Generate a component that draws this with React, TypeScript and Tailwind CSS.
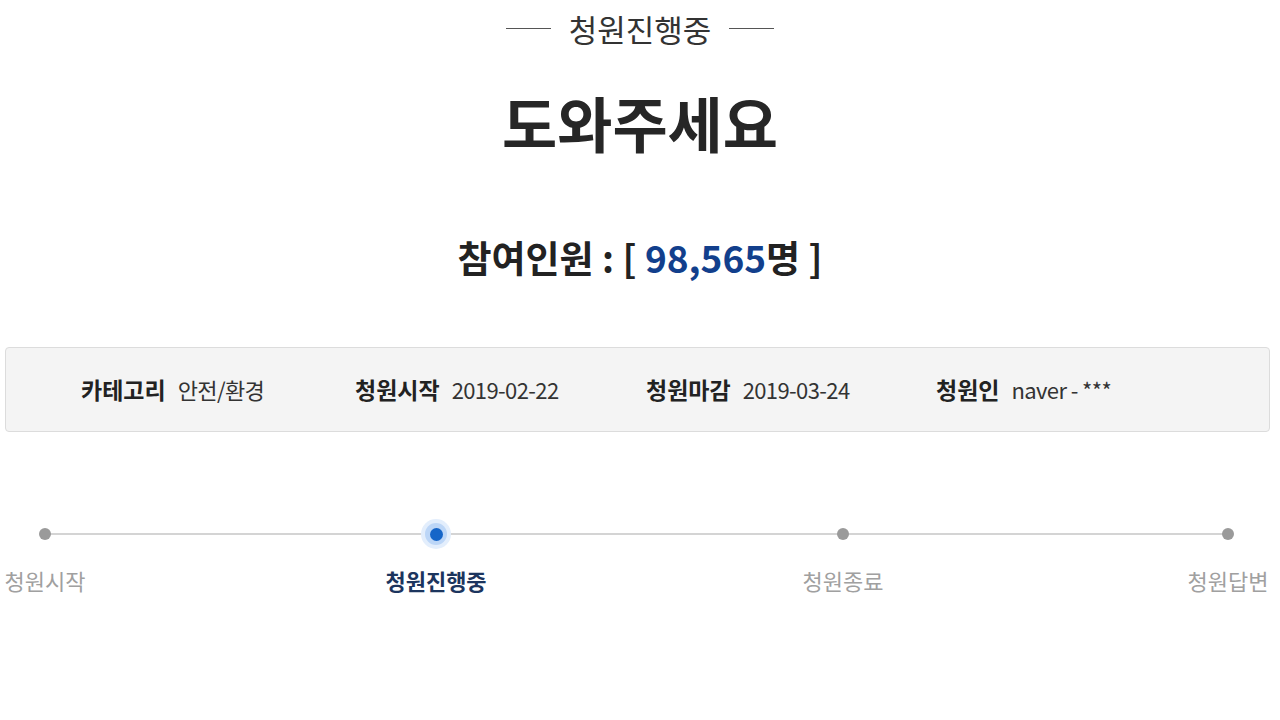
import React from "react";

const font = { fontFamily: '"Noto Sans CJK KR", "Noto Sans", sans-serif' };

function Info({ label, value }: { label: string; value: string }) {
  return (
    <div className="flex items-center gap-[12px]">
      <span className="text-[23px] font-bold text-[#222]">{label}</span>
      <span className="text-[22px] text-[#333] tracking-[-0.6px]">{value}</span>
    </div>
  );
}

function Step({ label, active, ml }: { label: string; active?: boolean; ml: string }) {
  return (
    <div className={`flex w-[90px] flex-col items-center ${ml}`}>
      <div className="flex h-[30px] w-[30px] items-center justify-center">
        {active ? (
          <div className="flex h-[30px] w-[30px] items-center justify-center rounded-full bg-[#e3eefc]">
            <div className="flex h-[22px] w-[22px] items-center justify-center rounded-full bg-[#bcd6f7]">
              <div className="h-[13px] w-[13px] rounded-full bg-[#1565c8]" />
            </div>
          </div>
        ) : (
          <div className="h-[12px] w-[12px] rounded-full bg-[#9a9a9a]" />
        )}
      </div>
      <div
        className={`mt-[17px] whitespace-nowrap text-[22px] leading-[28px] ${
          active ? "font-bold text-[#1c355e]" : "text-[#a0a0a0]"
        }`}
      >
        {label}
      </div>
    </div>
  );
}

export default function App() {
  return (
    <div className="h-[720px] w-[1280px] overflow-hidden bg-white" style={font}>
      <div className="flex h-[56px] items-center justify-center gap-[18px]">
        <div className="h-[1px] w-[45px] bg-[#555]" />
        <span className="text-[31px] leading-none text-[#333]">청원진행중</span>
        <div className="h-[1px] w-[45px] bg-[#555]" />
      </div>
      <div className="flex h-[132px] items-center justify-center">
        <span className="text-[60px] font-bold leading-none text-[#262626]">도와주세요</span>
      </div>
      <div className="flex h-[138px] items-center justify-center">
        <span className="text-[37px] font-bold leading-none text-[#222]">
          참여인원 : [ <span className="text-[#123f8c]">98,565</span>명 ]
        </span>
      </div>
      <div className="ml-[5px] mr-[10px] mt-[21px] grid h-[85px] grid-cols-[274px_291px_290px_auto] items-center rounded-[4px] border border-[#dcdcdc] bg-[#f4f4f4] pl-[75px]">
        <Info label="카테고리" value="안전/환경" />
        <Info label="청원시작" value="2019-02-22" />
        <Info label="청원마감" value="2019-03-24" />
        <Info label="청원인" value="naver - ***" />
      </div>
      <div className="relative mt-[87px]">
        <div className="absolute left-[45px] top-[14px] h-[2px] w-[1183px] bg-[#d4d4d4]" />
        <div className="relative flex">
          <Step label="청원시작" ml="" />
          <Step label="청원진행중" active ml="ml-[301px]" />
          <Step label="청원종료" ml="ml-[317px]" />
          <Step label="청원답변" ml="ml-[295px]" />
        </div>
      </div>
    </div>
  );
}
